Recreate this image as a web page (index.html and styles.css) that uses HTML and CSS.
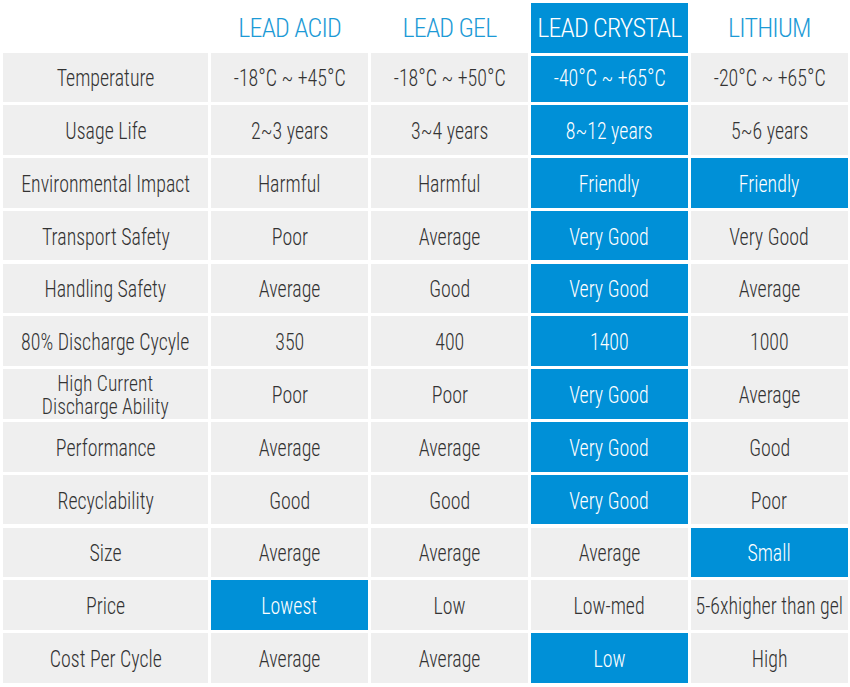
FILE: index.html
```html
<!DOCTYPE html>
<html lang="en">
<head>
<meta charset="utf-8">
<title>Battery comparison</title>
<link rel="stylesheet" href="styles.css">
</head>
<body>
<div class="table">
  <div class="head">
    <div class="hcell"></div>
    <div class="hcell">LEAD ACID</div>
    <div class="hcell">LEAD GEL</div>
    <div class="hcell hi">LEAD CRYSTAL</div>
    <div class="hcell">LITHIUM</div>
  </div>
  <div class="body">
    <div class="cell"><span class="t">Temperature</span></div>
    <div class="cell"><span class="t">-18°C ~ +45°C</span></div>
    <div class="cell"><span class="t">-18°C ~ +50°C</span></div>
    <div class="cell hi first"><span class="t">-40°C ~ +65°C</span></div>
    <div class="cell"><span class="t">-20°C ~ +65°C</span></div>

    <div class="cell"><span class="t">Usage Life</span></div>
    <div class="cell"><span class="t">2~3 years</span></div>
    <div class="cell"><span class="t">3~4 years</span></div>
    <div class="cell hi"><span class="t">8~12 years</span></div>
    <div class="cell"><span class="t">5~6 years</span></div>

    <div class="cell"><span class="t">Environmental Impact</span></div>
    <div class="cell"><span class="t">Harmful</span></div>
    <div class="cell"><span class="t">Harmful</span></div>
    <div class="cell hi"><span class="t">Friendly</span></div>
    <div class="cell hi"><span class="t">Friendly</span></div>

    <div class="cell"><span class="t">Transport Safety</span></div>
    <div class="cell"><span class="t">Poor</span></div>
    <div class="cell"><span class="t">Average</span></div>
    <div class="cell hi"><span class="t">Very Good</span></div>
    <div class="cell"><span class="t">Very Good</span></div>

    <div class="cell"><span class="t">Handling Safety</span></div>
    <div class="cell"><span class="t">Average</span></div>
    <div class="cell"><span class="t">Good</span></div>
    <div class="cell hi"><span class="t">Very Good</span></div>
    <div class="cell"><span class="t">Average</span></div>

    <div class="cell"><span class="t">80% Discharge Cycyle</span></div>
    <div class="cell"><span class="t">350</span></div>
    <div class="cell"><span class="t">400</span></div>
    <div class="cell hi"><span class="t">1400</span></div>
    <div class="cell"><span class="t">1000</span></div>

    <div class="cell two"><span class="t">High Current<br>Discharge Ability</span></div>
    <div class="cell"><span class="t">Poor</span></div>
    <div class="cell"><span class="t">Poor</span></div>
    <div class="cell hi"><span class="t">Very Good</span></div>
    <div class="cell"><span class="t">Average</span></div>

    <div class="cell"><span class="t">Performance</span></div>
    <div class="cell"><span class="t">Average</span></div>
    <div class="cell"><span class="t">Average</span></div>
    <div class="cell hi"><span class="t">Very Good</span></div>
    <div class="cell"><span class="t">Good</span></div>

    <div class="cell"><span class="t">Recyclability</span></div>
    <div class="cell"><span class="t">Good</span></div>
    <div class="cell"><span class="t">Good</span></div>
    <div class="cell hi"><span class="t">Very Good</span></div>
    <div class="cell"><span class="t">Poor</span></div>

    <div class="cell"><span class="t">Size</span></div>
    <div class="cell"><span class="t">Average</span></div>
    <div class="cell"><span class="t">Average</span></div>
    <div class="cell"><span class="t">Average</span></div>
    <div class="cell hi"><span class="t">Small</span></div>

    <div class="cell"><span class="t">Price</span></div>
    <div class="cell hi"><span class="t">Lowest</span></div>
    <div class="cell"><span class="t">Low</span></div>
    <div class="cell"><span class="t">Low-med</span></div>
    <div class="cell"><span class="t">5-6xhigher than gel</span></div>

    <div class="cell"><span class="t">Cost Per Cycle</span></div>
    <div class="cell"><span class="t">Average</span></div>
    <div class="cell"><span class="t">Average</span></div>
    <div class="cell hi"><span class="t">Low</span></div>
    <div class="cell"><span class="t">High</span></div>
  </div>
</div>
</body>
</html>
```

FILE: styles.css
```css
html, body {
  margin: 0;
  padding: 0;
  background: #ffffff;
}

.table {
  padding: 3px 0 0 3px;
  font-family: "Roboto", "Liberation Sans", sans-serif;
  font-weight: 300;
  font-stretch: 75%;
  color: #333333;
}

.head,
.body {
  display: grid;
  grid-template-columns: 205px repeat(4, 156.6px);
  column-gap: 3.3px;
}

.head {
  grid-template-rows: 49.5px;
}

.body {
  grid-auto-rows: 49.5px;
  row-gap: 3.3px;
}

.hcell {
  display: flex;
  align-items: center;
  justify-content: center;
  font-size: 26px;
  letter-spacing: -0.8px;
  color: #1c9ad6;
  white-space: nowrap;
}

.hcell.hi {
  background: #0090d7;
  color: #ffffff;
}

.cell {
  display: flex;
  align-items: center;
  justify-content: center;
  box-sizing: border-box;
  padding-top: 4px;
  text-align: center;
  background: #efefef;
  font-size: 23px;
  line-height: 26px;
  white-space: nowrap;
}

.t {
  display: inline-block;
  transform: scaleX(0.865);
}

.cell.two {
  padding-top: 2px;
  font-size: 22px;
  line-height: 23px;
}

.cell.two .t {
  transform: scaleX(0.89);
}

.cell.hi {
  background: #0090d7;
  color: #ffffff;
}

.cell.first {
  margin-top: 3px;
  padding-top: 1px;
}
```
